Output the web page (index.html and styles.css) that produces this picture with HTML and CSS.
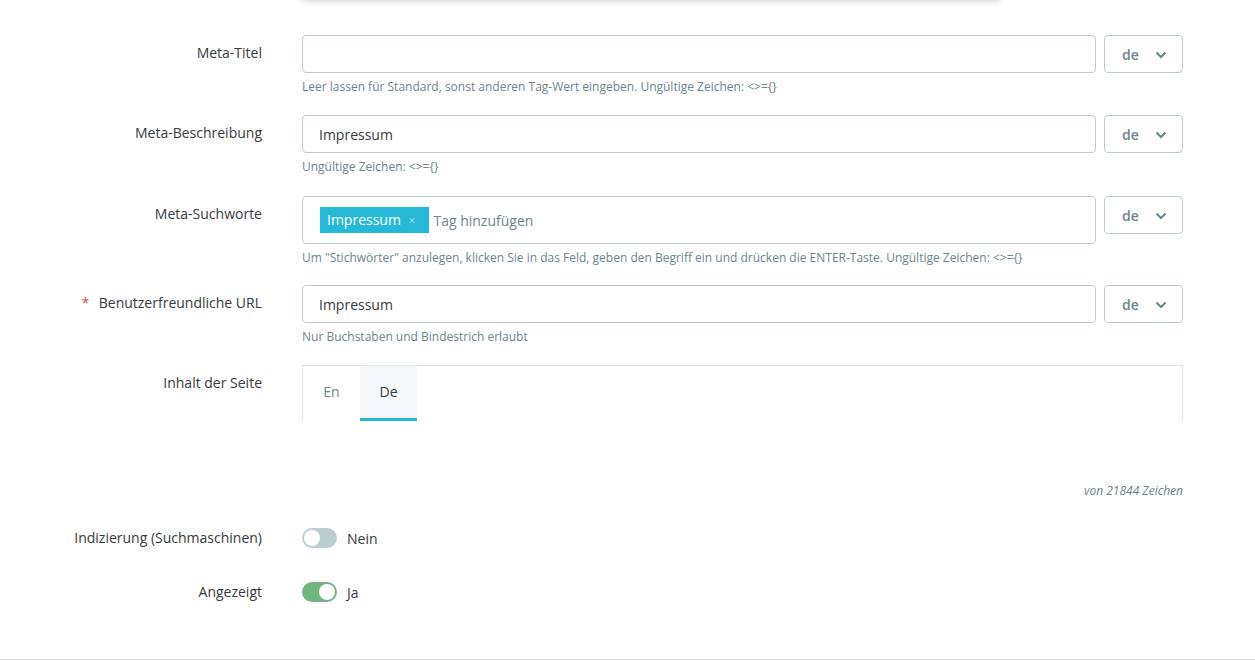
FILE: index.html
```html
<!DOCTYPE html>
<html lang="de">
<head>
    <meta charset="UTF-8">
    <title>Seite bearbeiten</title>
    <link rel="stylesheet" href="styles.css">
</head>
<body>
    <div class="card-edge"></div>

    <div class="form">
        <div class="row">
            <label class="label">Meta-Titel</label>
            <div class="field">
                <div class="input-group">
                    <input class="input" type="text" value="">
                    <button class="lang">de <span class="chev"><svg width="12" height="8" viewBox="0 0 12 8"><path d="M1.5 1.5 L6 6 L10.5 1.5" fill="none" stroke="#6c868e" stroke-width="2"/></svg></span></button>
                </div>
                <div class="help">Leer lassen für Standard, sonst anderen Tag-Wert eingeben. Ungültige Zeichen: &lt;&gt;={}</div>
            </div>
        </div>

        <div class="row">
            <label class="label">Meta-Beschreibung</label>
            <div class="field">
                <div class="input-group">
                    <input class="input" type="text" value="Impressum">
                    <button class="lang">de <span class="chev"><svg width="12" height="8" viewBox="0 0 12 8"><path d="M1.5 1.5 L6 6 L10.5 1.5" fill="none" stroke="#6c868e" stroke-width="2"/></svg></span></button>
                </div>
                <div class="help">Ungültige Zeichen: &lt;&gt;={}</div>
            </div>
        </div>

        <div class="row tags-row">
            <label class="label">Meta-Suchworte</label>
            <div class="field">
                <div class="input-group">
                    <div class="input tags">
                        <span class="tag">Impressum <span class="tag-x">×</span></span>
                        <span class="tag-placeholder">Tag hinzufügen</span>
                    </div>
                    <button class="lang">de <span class="chev"><svg width="12" height="8" viewBox="0 0 12 8"><path d="M1.5 1.5 L6 6 L10.5 1.5" fill="none" stroke="#6c868e" stroke-width="2"/></svg></span></button>
                </div>
                <div class="help">Um "Stichwörter" anzulegen, klicken Sie in das Feld, geben den Begriff ein und drücken die ENTER-Taste. Ungültige Zeichen: &lt;&gt;={}</div>
            </div>
        </div>

        <div class="row">
            <label class="label"><span class="req">*</span> Benutzerfreundliche URL</label>
            <div class="field">
                <div class="input-group">
                    <input class="input" type="text" value="Impressum">
                    <button class="lang">de <span class="chev"><svg width="12" height="8" viewBox="0 0 12 8"><path d="M1.5 1.5 L6 6 L10.5 1.5" fill="none" stroke="#6c868e" stroke-width="2"/></svg></span></button>
                </div>
                <div class="help">Nur Buchstaben und Bindestrich erlaubt</div>
            </div>
        </div>

        <div class="row">
            <label class="label">Inhalt der Seite</label>
            <div class="field">
                <div class="tabs">
                    <a class="tab">En</a>
                    <a class="tab active">De</a>
                </div>
                <div class="editor-space"></div>
                <div class="counter">von 21844 Zeichen</div>
            </div>
        </div>

        <div class="row switch-row">
            <label class="label">Indizierung (Suchmaschinen)</label>
            <div class="field switch-field">
                <span class="switch"><span class="knob"></span></span>
                <span class="switch-text">Nein</span>
            </div>
        </div>

        <div class="row switch-row">
            <label class="label">Angezeigt</label>
            <div class="field switch-field">
                <span class="switch on"><span class="knob"></span></span>
                <span class="switch-text">Ja</span>
            </div>
        </div>
    </div>

    <div class="footer-line"></div>
</body>
</html>
```

FILE: styles.css
```css
body {
    font-family: 'Open Sans', 'Noto Sans', sans-serif;
    background-color: #fff;
    color: #363a41;
    margin: 0;
    padding: 0;
    font-size: 14px;
}
.card-edge {
    width: 698px;
    height: 10px;
    margin: -10px 0 0 302px;
    background-color: #fff;
    box-shadow: 0 1px 6px rgba(0, 0, 0, 0.18);
}
.form {
    width: 1183px;
    padding-top: 35px;
}
.row {
    display: grid;
    grid-template-columns: 262px 1fr;
    column-gap: 40px;
    margin-bottom: 20px;
}
.tags-row {
    margin-top: 21px;
    margin-bottom: 19px;
}
.label {
    text-align: right;
    padding-top: 9px;
    line-height: 18px;
    font-size: 14px;
    color: #363a41;
}
.req {
    color: #c05c67;
    margin-right: 6px;
}
.input-group {
    display: flex;
    gap: 8px;
}
.input {
    flex: 1;
    height: 38px;
    box-sizing: border-box;
    border: 1px solid #bbcdd2;
    border-radius: 4px;
    padding: 0 16px;
    font-family: inherit;
    font-size: 14px;
    color: #363a41;
    outline: none;
}
.tags {
    height: 48px;
    display: flex;
    align-items: center;
    padding: 0 17px;
}
.tag {
    background-color: #25b9d7;
    color: #fff;
    height: 26px;
    line-height: 26px;
    padding: 0 14px 0 7px;
    font-size: 14px;
}
.tag-x {
    font-size: 12px;
    color: #a6e3ef;
    margin-left: 4px;
}
.tag-placeholder {
    margin-left: 4px;
    color: #6c868e;
}
.lang {
    width: 79px;
    height: 38px;
    box-sizing: border-box;
    border: 1px solid #bbcdd2;
    border-radius: 4px;
    background-color: #fff;
    font-family: inherit;
    font-size: 14px;
    font-weight: 600;
    color: #6c868e;
    display: flex;
    align-items: center;
    padding: 0 0 0 17px;
    gap: 16px;
}
.chev {
    display: flex;
    margin-top: 2px;
}
.help {
    margin-top: 5px;
    font-size: 12px;
    line-height: 17px;
    color: #6c868e;
}
.tabs {
    display: flex;
    height: 55px;
    border: 1px solid #dfe6e8;
    border-bottom: none;
}
.tab {
    width: 57px;
    text-align: center;
    line-height: 52px;
    font-size: 14px;
    color: #6c868e;
    border-bottom: 3px solid transparent;
}
.tab.active {
    background-color: #f4f9fb;
    color: #363a41;
    border-bottom-color: #25b9d7;
}
.editor-space {
    height: 62px;
}
.counter {
    text-align: right;
    font-size: 12px;
    font-style: italic;
    color: #6c868e;
    line-height: 16px;
}
.switch-row {
    margin-bottom: 16px;
}
.switch-row .label {
    padding-top: 10px;
}
.switch-field {
    display: flex;
    align-items: center;
    gap: 10px;
    height: 38px;
}
.switch {
    position: relative;
    width: 35px;
    height: 20px;
    border-radius: 10px;
    background-color: #bbcdd2;
}
.switch .knob {
    position: absolute;
    top: 2px;
    left: 2px;
    width: 16px;
    height: 16px;
    border-radius: 50%;
    background-color: #fff;
}
.switch.on {
    background-color: #70b580;
}
.switch.on .knob {
    left: 17px;
}
.switch-text {
    font-size: 14px;
    color: #363a41;
}
.footer-line {
    margin-top: 48px;
    border-top: 1px solid #dfdfdf;
}
```
